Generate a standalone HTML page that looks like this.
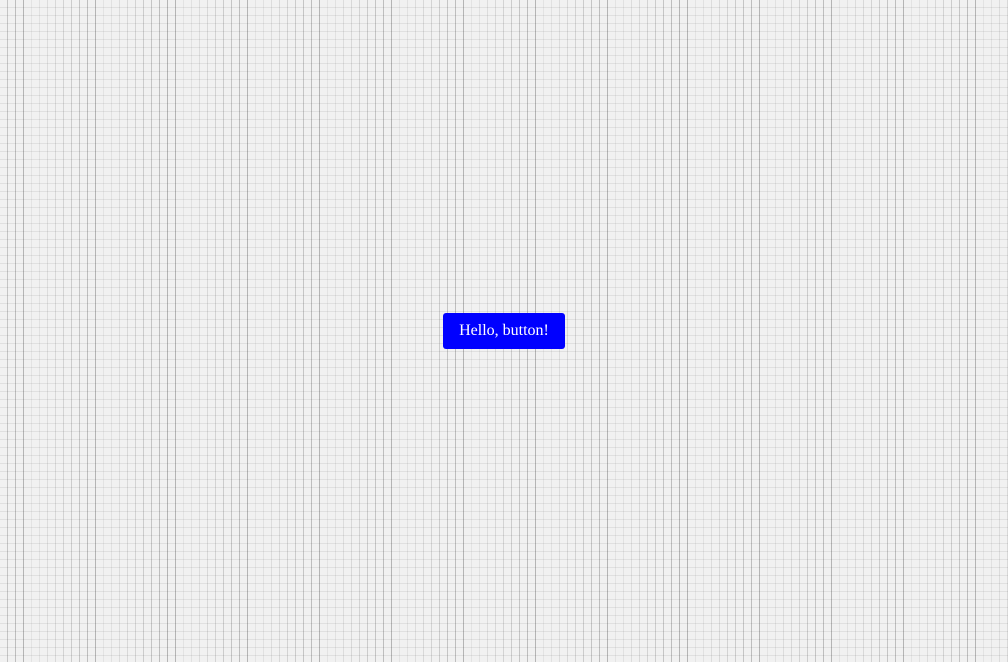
<!DOCTYPE html>
<html><head><style>
html,body{margin:0;padding:0;width:1008px;height:662px;overflow:hidden}
body{background-color:#f1f1f1;position:relative;
background-image:
linear-gradient(to right, transparent 7px, rgba(0,0,0,.035) 7px, rgba(0,0,0,.035) 8px, transparent 8px),
linear-gradient(to bottom, transparent 7px, rgba(0,0,0,.07) 7px, rgba(0,0,0,.07) 8px, transparent 8px);
background-size:8px 100%,100% 8px;}
.r{position:absolute;top:0;height:662px;
background-image:
linear-gradient(to right, transparent 7px, rgba(0,0,0,.02) 7px, rgba(0,0,0,.02) 8px, transparent 8px),
linear-gradient(to right, transparent 15px, rgba(0,0,0,.03) 15px, rgba(0,0,0,.03) 16px, transparent 16px),
linear-gradient(to right, transparent 23px, rgba(0,0,0,.05) 23px, rgba(0,0,0,.05) 24px, transparent 24px),
linear-gradient(to right, transparent 31px, rgba(0,0,0,.07) 31px, rgba(0,0,0,.07) 32px, transparent 32px),
linear-gradient(to right, transparent 39px, rgba(0,0,0,.09) 39px, rgba(0,0,0,.09) 40px, transparent 40px),
linear-gradient(to right, transparent 47px, rgba(0,0,0,.12) 47px, rgba(0,0,0,.12) 48px, transparent 48px),
linear-gradient(to right, transparent 55px, rgba(0,0,0,.15) 55px, rgba(0,0,0,.15) 56px, transparent 56px),
linear-gradient(to right, transparent 63px, rgba(0,0,0,.18) 63px, rgba(0,0,0,.18) 64px, transparent 64px),
linear-gradient(to right, transparent 71px, rgba(0,0,0,.22) 71px, rgba(0,0,0,.22) 72px, transparent 72px);
background-size:72px 100%;}
.a{left:0;width:175px;background-position:24px 0}
.b{left:175px;width:512px;background-position:1px 0}
.c{left:687px;width:321px;background-position:1px 0}
.btn{position:absolute;left:443px;top:313px;width:122px;height:36px;background:#0000ff;border-radius:3px;color:#fff;font-family:"Liberation Serif",serif;font-size:16px;line-height:36px;text-align:center}
</style></head><body>
<div class="r a"></div><div class="r b"></div><div class="r c"></div>
<div class="btn">Hello, button!</div>
</body></html>
